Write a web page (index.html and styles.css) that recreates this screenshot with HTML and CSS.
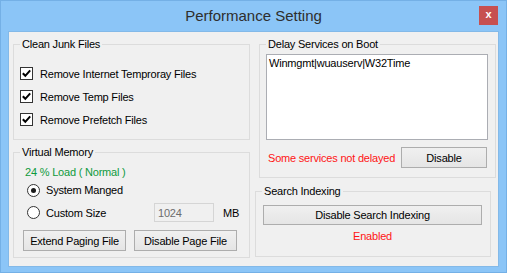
FILE: index.html
```html
<!DOCTYPE html>
<html lang="en">
<head>
    <meta charset="UTF-8">
    <title>Performance Setting</title>
    <link rel="stylesheet" href="styles.css">
</head>
<body>

    <div class="window">
        <div class="titlebar">
            <span></span>
            <span class="title">Performance Setting</span>
            <span class="close">x</span>
        </div>

        <div class="client">
            <div class="col-left">
                <fieldset class="group junk">
                    <legend>Clean Junk Files</legend>
                    <div class="check-row"><span class="check"><svg width="11" height="11" viewBox="0 0 11 11"><polyline points="1.8,5.2 4.3,7.8 9.2,2.3" fill="none" stroke="#000" stroke-width="2"/></svg></span>Remove Internet Temproray Files</div>
                    <div class="check-row"><span class="check"><svg width="11" height="11" viewBox="0 0 11 11"><polyline points="1.8,5.2 4.3,7.8 9.2,2.3" fill="none" stroke="#000" stroke-width="2"/></svg></span>Remove Temp Files</div>
                    <div class="check-row"><span class="check"><svg width="11" height="11" viewBox="0 0 11 11"><polyline points="1.8,5.2 4.3,7.8 9.2,2.3" fill="none" stroke="#000" stroke-width="2"/></svg></span>Remove Prefetch Files</div>
                </fieldset>

                <fieldset class="group memory">
                    <legend>Virtual Memory</legend>
                    <div class="load">24 % Load ( Normal )</div>
                    <div class="radio-row first">
                        <label class="radio-label"><span class="radio on"><span class="dot"></span></span>System Manged</label>
                    </div>
                    <div class="radio-row">
                        <label class="radio-label"><span class="radio"></span>Custom Size</label>
                        <input class="size" type="text" value="1024" disabled>
                        <span class="unit">MB</span>
                    </div>
                    <div class="btn-row">
                        <button class="btn page">Extend Paging File</button>
                        <button class="btn page">Disable Page File</button>
                    </div>
                </fieldset>
            </div>

            <div class="col-right">
                <fieldset class="group delay">
                    <legend>Delay Services on Boot</legend>
                    <textarea class="services">Winmgmt|wuauserv|W32Time</textarea>
                    <div class="status-row">
                        <span class="warn">Some services not delayed</span>
                        <button class="btn disable">Disable</button>
                    </div>
                </fieldset>

                <fieldset class="group search">
                    <legend>Search Indexing</legend>
                    <button class="btn wide">Disable Search Indexing</button>
                    <div class="enabled">Enabled</div>
                </fieldset>
            </div>
        </div>
    </div>

</body>
</html>
```

FILE: styles.css
```css
body {
    margin: 0;
    font-family: "Liberation Sans", Arial, sans-serif;
    font-size: 11px;
    letter-spacing: -0.2px;
    color: #000;
}

.window {
    box-sizing: border-box;
    width: 507px;
    height: 273px;
    background-color: #8bc5f7;
    border: 1px solid #74b0e6;
}

.titlebar {
    display: grid;
    grid-template-columns: 1fr auto 1fr;
    height: 30px;
}

.title {
    font-size: 15px;
    line-height: 29px;
    letter-spacing: 0;
    color: #2e2e2e;
}

.close {
    justify-self: end;
    width: 19px;
    height: 19px;
    margin: 5px 8px 0 0;
    background-color: #c75050;
    color: white;
    font-weight: bold;
    font-size: 11px;
    line-height: 17px;
    text-align: center;
}

.client {
    box-sizing: border-box;
    display: flex;
    height: 236px;
    margin: 0 7px;
    padding: 6px 0 0 4px;
    background-color: #f0f0f0;
    border: 1px solid #83b9e8;
}

.col-left {
    width: 237px;
}

.col-right {
    margin-left: 5px;
}

.group {
    margin: 0;
    padding: 3px 7px 8px 6px;
    border: 1px solid #dcdcdc;
    min-width: 0;
}

.group legend {
    padding: 0 2px;
    line-height: 13px;
}

/* clean junk */
.junk {
    width: 237px;
    box-sizing: border-box;
    padding-top: 11px;
}

.check-row {
    display: flex;
    align-items: center;
    height: 23px;
}

.check {
    display: flex;
    width: 11px;
    height: 11px;
    margin-right: 7px;
    background: white;
    border: 1px solid #333;
}

/* virtual memory */
.memory {
    width: 237px;
    box-sizing: border-box;
    margin-top: 6px;
    padding-top: 7px;
    padding-bottom: 6px;
}

.load {
    line-height: 13px;
    padding-left: 5px;
    color: #0f9a3c;
}

.radio-row {
    display: flex;
    align-items: center;
    height: 23px;
}

.radio-row.first {
    height: 22px;
}

.radio-label {
    display: flex;
    align-items: center;
    width: 127px;
    margin-left: 7px;
}

.radio {
    display: flex;
    align-items: center;
    justify-content: center;
    width: 11px;
    height: 11px;
    margin-right: 6px;
    border: 1px solid #333;
    border-radius: 50%;
    background: white;
}

.radio .dot {
    width: 5px;
    height: 5px;
    border-radius: 50%;
    background: #1a1a1a;
}

.size {
    box-sizing: border-box;
    width: 60px;
    height: 19px;
    padding: 0 3px;
    border: 1px solid #d5d5d5;
    background: #f0f0f0;
    color: #6d6d6d;
    font-family: inherit;
    font-size: 11px;
    letter-spacing: -0.2px;
}

.unit {
    margin-left: 9px;
}

.btn-row {
    display: flex;
    gap: 8px;
    margin: 6px 0 0 3px;
}

.btn {
    box-sizing: border-box;
    height: 21px;
    padding: 0;
    border: 1px solid #adadad;
    background: linear-gradient(#f0f0f0, #e5e5e5);
    font-family: inherit;
    font-size: 11px;
    letter-spacing: -0.2px;
    color: #000;
}

.btn.page {
    width: 103px;
}

/* delay services */
.delay {
    width: 237px;
    box-sizing: border-box;
    margin-left: 4px;
    padding-bottom: 9px;
}

.services {
    display: block;
    box-sizing: border-box;
    width: 222px;
    height: 86px;
    margin: 0;
    padding: 2px 2px;
    border: 1px solid #abadb3;
    resize: none;
    font-family: inherit;
    font-size: 11px;
    letter-spacing: -0.2px;
    line-height: 13px;
}

.status-row {
    display: flex;
    align-items: center;
    justify-content: space-between;
    margin-top: 7px;
    padding-left: 2px;
}

.warn {
    color: #ff1414;
}

.btn.disable {
    width: 86px;
    margin-right: 1px;
}

/* search indexing */
.search {
    width: 236px;
    box-sizing: border-box;
    margin-top: 7px;
    padding-top: 7px;
    padding-bottom: 13px;
}

.btn.wide {
    display: block;
    width: 219px;
    height: 20px;
    margin-left: 1px;
}

.enabled {
    margin-top: 5px;
    line-height: 13px;
    text-align: center;
    color: #ff1414;
}
```
